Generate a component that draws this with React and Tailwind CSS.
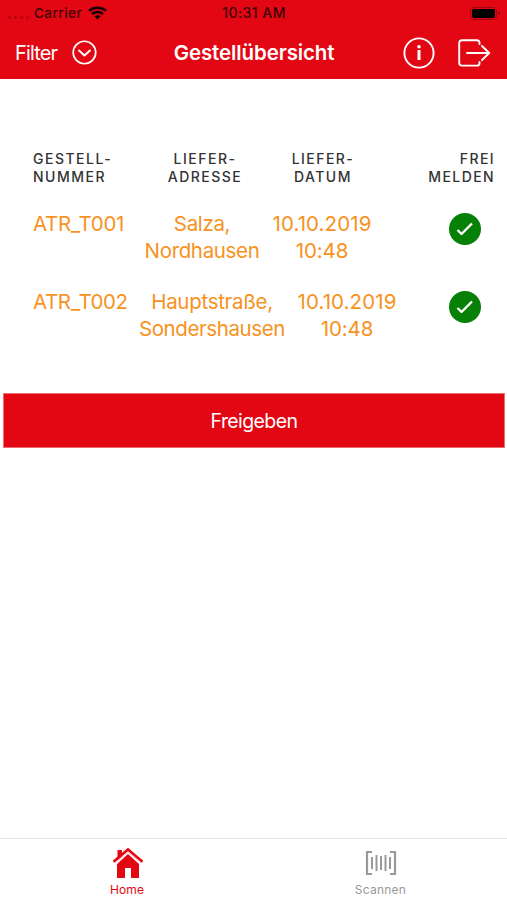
import React from 'react';

function StatusBar() {
  return (
    <div className="flex h-[26px] items-center justify-between pl-2 pr-[7px] text-[13px] font-medium leading-[26px] text-[#3b0306]">
      <div className="flex w-[150px] items-center">
        <div className="mt-[8px] flex w-[26px] gap-[3px]">
          <i className="size-[3px] rounded-full bg-[#b5040e]" />
          <i className="size-[3px] rounded-full bg-[#b5040e]" />
          <i className="size-[3px] rounded-full bg-[#b5040e]" />
          <i className="size-[3px] rounded-full bg-[#b5040e]" />
        </div>
        <span className="w-[54px] text-[13.5px] tracking-[0.45px]">Carrier</span>
        <svg width="19" height="14" viewBox="0 0 19 14" fill="none" stroke="#160001" strokeWidth="2.6">
          <path d="M1 4.8C5.7.7 13.3.7 18 4.8" />
          <path d="M4 8.1c3.2-2.7 7.8-2.7 11 0" />
          <path d="M6.4 10.2c1.8-1.4 4.4-1.4 6.2 0L9.5 13.5z" fill="#160001" stroke="none" />
        </svg>
      </div>
      <span className="text-[14px] tracking-[0.45px]">10:31 AM</span>
      <div className="flex w-[150px] items-center justify-end gap-px">
        <div className="h-[13px] w-[27px] rounded-[4px] border border-[#a4040d] p-[1px]">
          <div className="h-full rounded-[2px] bg-black" />
        </div>
        <i className="h-1 w-[2px] rounded-r-full bg-[#a4040d]" />
      </div>
    </div>
  );
}

function NavBar() {
  return (
    <div className="flex h-[53px] items-center pl-[15px] pr-4 text-white">
      <span className="w-[57px] text-[20px] tracking-[-0.85px]">Filter</span>
      <svg width="25" height="25" viewBox="0 0 25 25" fill="none" stroke="currentColor" strokeWidth="1.7" strokeLinecap="round" strokeLinejoin="round">
        <circle cx="12.5" cy="12.5" r="11.3" />
        <path d="m7 10.5 5.5 5 5.5-5" strokeWidth="2" />
      </svg>
      <h1 className="ml-[77px] w-[230px] pt-px text-[20.5px] font-semibold tracking-[-0.12px]">Gestellübersicht</h1>
      <svg className="shrink-0" width="32" height="32" viewBox="0 0 32 32" fill="none" stroke="currentColor" strokeWidth="1.9">
        <circle cx="16" cy="16" r="14.6" />
        <path d="M16 13V23" strokeWidth="3" />
        <circle cx="16" cy="9.8" r="1.8" fill="currentColor" stroke="none" />
      </svg>
      <svg className="ml-[23px] shrink-0" width="33" height="28" viewBox="0 0 33 28" fill="none" stroke="currentColor" strokeWidth="1.9" strokeLinecap="round" strokeLinejoin="round">
        <path d="M21.5 5V3.7Q21.5 1.2 19 1.2H4Q1.2 1.2 1.2 4V23.8Q1.2 26.6 4 26.6H19Q21.5 26.6 21.5 24.2V23" />
        <path d="M9 14H31M24 7l7.2 7L24 21" />
      </svg>
    </div>
  );
}

function CheckBadge() {
  return (
    <svg className="mt-[3px]" width="32" height="32" viewBox="0 0 32 32" fill="none">
      <circle cx="16" cy="16" r="16" fill="#078008" />
      <path d="m8.5 17 4 4 10.5-10.5" stroke="white" strokeWidth="2.4" strokeLinejoin="round" />
    </svg>
  );
}

function Heading({ className, lines }) {
  return (
    <div className={className}>
      {lines.map((line) => (
        <div key={line}>{line}</div>
      ))}
    </div>
  );
}

export default function App() {
  return (
    <div className="flex h-[900px] w-[507px] flex-col overflow-hidden bg-white font-['Inter',sans-serif]">
      <header className="h-[79px] bg-[#e30613]">
        <StatusBar />
        <NavBar />
      </header>
      <main className="grow">
        <div className="flex whitespace-nowrap pl-[33px] pt-[71px] text-[14px] font-medium leading-[18px] text-[#333]">
          <Heading className="w-[120px] tracking-[1.5px]" lines={['GESTELL-', 'NUMMER']} />
          <Heading className="w-[104px] text-center tracking-[1.5px]" lines={['LIEFER-', 'ADRESSE']} />
          <Heading className="ml-[14px] w-[104px] text-center tracking-[1.45px]" lines={['LIEFER-', 'DATUM']} />
          <Heading className="w-[120px] text-right tracking-[1.4px]" lines={['FREI', 'MELDEN']} />
        </div>
        <div className="flex whitespace-nowrap pl-[33px] pt-[24px] text-[20.5px] leading-[27px] tracking-[-0.35px] text-[#f7921e]">
          <span className="w-[99px]">ATR_T001</span>
          <div className="w-[140px] text-center">Salza,<br />Nordhausen</div>
          <div className="w-[100px] text-center"><span className="tracking-[0.1px]">10.10.2019</span><br /><span className="tracking-[-0.1px]">10:48</span></div>
          <div className="ml-[77px]"><CheckBadge /></div>
        </div>
        <div className="flex whitespace-nowrap pl-[33px] pt-[24px] text-[20.5px] leading-[27px] tracking-[-0.4px] text-[#f7921e]">
          <span className="w-[99px]">ATR_T002</span>
          <div className="w-[160px] text-center"><span className="tracking-[-0.3px]">Hauptstraße,</span><br />Sondershausen</div>
          <div className="ml-[5px] w-[100px] text-center"><span className="tracking-[0.1px]">10.10.2019</span><br /><span className="tracking-[-0.1px]">10:48</span></div>
          <div className="ml-[52px]"><CheckBadge /></div>
        </div>
        <button className="ml-[3px] mt-[51px] flex h-[55px] w-[502px] items-center justify-center border border-[#ee6c73] bg-[#e30613] pt-[3px] text-[19.5px] tracking-[-0.6px] text-white">Freigeben</button>
      </main>
      <nav className="flex h-[62px] border-t border-[#e6e6e6] bg-white text-[12px] leading-[15px]">
        <div className="flex w-[254px] flex-col items-center pt-[8px] text-[#e30613]">
          <svg className="ml-px" width="32" height="32" viewBox="0 0 32 32" fill="currentColor">
            <path d="M5.500 3h4.500v6L5.500 13.500zM5 17 16 7 27 17v14h-8V21h-6v10H5z" />
            <path d="M1.500 14.700 16 2.500l14.500 12.200" fill="none" stroke="currentColor" strokeWidth="2.6" />
            <path d="M3 16 16 5.200 29 16" fill="none" stroke="#f7c5c7" strokeWidth="1" />
          </svg>
          <span className="mt-[3px] tracking-[0.15px]">Home</span>
        </div>
        <div className="flex w-[253px] flex-col items-center pt-[8px] text-[#999]">
          <svg width="32" height="32" viewBox="0 0 32 32" fill="none" stroke="currentColor" strokeWidth="2">
            <path d="M7 5H2v22h5M25 5h5v22h-5" strokeWidth="2.2" />
            <path d="M7 10v12M11.500 8v16M16 9v14M20.500 8v16M25 10v12" />
          </svg>
          <span className="mt-[3px] tracking-[0.25px]">Scannen</span>
        </div>
      </nav>
    </div>
  );
}
